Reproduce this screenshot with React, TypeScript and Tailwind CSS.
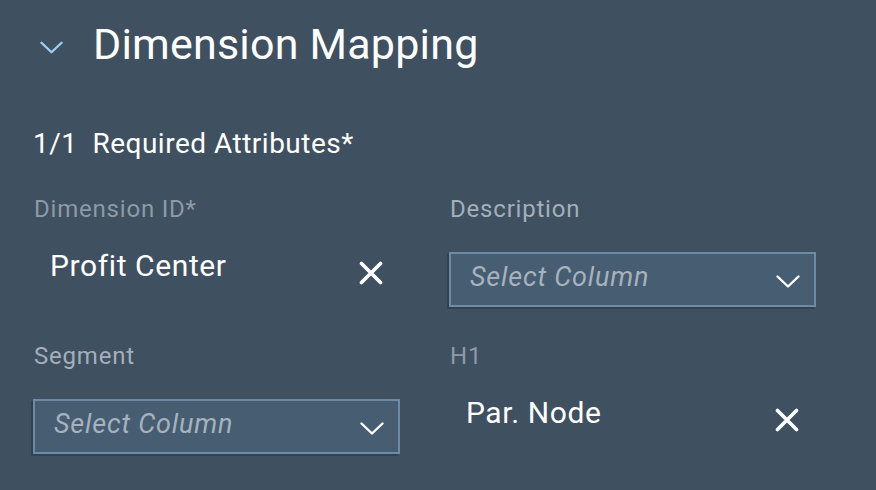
import { useState } from "react";

const font = { fontFamily: 'Roboto, "Noto Sans", Arial, sans-serif' };

function Chevron({ className }: { className?: string }) {
  return (
    <svg viewBox="0 0 24 13" className={className} fill="none">
      <path d="M1.5 1.5 L12 11.5 L22.5 1.5" stroke="currentColor" strokeWidth="2.4" strokeLinecap="round" strokeLinejoin="round" />
    </svg>
  );
}

function Cross({ className }: { className?: string }) {
  return (
    <svg viewBox="0 0 24 24" className={className} fill="none">
      <path d="M2.5 2.5 L21.5 21.5 M21.5 2.5 L2.5 21.5" stroke="currentColor" strokeWidth="3.6" strokeLinecap="round" />
    </svg>
  );
}

function Field({ label, filled, children }: { label: string; filled?: boolean; children: React.ReactNode }) {
  return (
    <div className="flex flex-col">
      <div
        className={
          "text-[24px] leading-[28px] tracking-[0.8px] pl-px " +
          (filled ? "text-[#8d9aa7]" : "text-[#a3afbb]")
        }
      >
        {label}
      </div>
      <div className="mt-[29px]">{children}</div>
    </div>
  );
}

function Value({ text }: { text: string }) {
  return (
    <div className="h-[55px] w-[367px] flex items-start justify-between pl-[17px] pr-[17px]">
      <span className="text-[30px] leading-[34px] tracking-[0.6px] text-white -mt-[3px]">{text}</span>
      <button className="text-white mt-[9px]">
        <Cross className="w-[24px] h-[24px]" />
      </button>
    </div>
  );
}

function SelectColumn() {
  const [open, setOpen] = useState(false);
  return (
    <button
      onClick={() => setOpen(!open)}
      className="h-[55px] w-[367px] flex items-center justify-between bg-[#475d72] border-2 border-[#6f8aa3] shadow-[-2px_2px_0_#34424f] pl-[19px] pr-[14px]"
    >
      <span className="italic text-[27px] tracking-[0.8px] text-[#a6b2bd] -mt-[4px]">Select Column</span>
      <Chevron className="w-[24px] h-[13px] text-white mt-[4px]" />
    </button>
  );
}

export default function App() {
  return (
    <div style={font} className="w-[876px] h-[490px] bg-[#3f5060] overflow-hidden pl-[33px]">
      <div className="flex items-center h-[90px]">
        <Chevron className="w-[23px] h-[13px] ml-[7px] mt-[4px] text-[#9fd0f2]" />
        <h2 className="ml-[30px] text-[43px] leading-[56px] tracking-[0.2px] text-white -mt-[2px]">Dimension Mapping</h2>
      </div>
      <div className="text-[28px] leading-[34px] tracking-[0.5px] text-white mt-[37px]">
        1/1&nbsp;&nbsp;Required Attributes*
      </div>
      <div className="grid grid-cols-[367px_367px] gap-x-[49px] gap-y-[35px] mt-[34px]">
        <Field label="Dimension ID*" filled>
          <Value text="Profit Center" />
        </Field>
        <Field label="Description">
          <SelectColumn />
        </Field>
        <Field label="Segment">
          <SelectColumn />
        </Field>
        <Field label="H1" filled>
          <Value text="Par. Node" />
        </Field>
      </div>
    </div>
  );
}
